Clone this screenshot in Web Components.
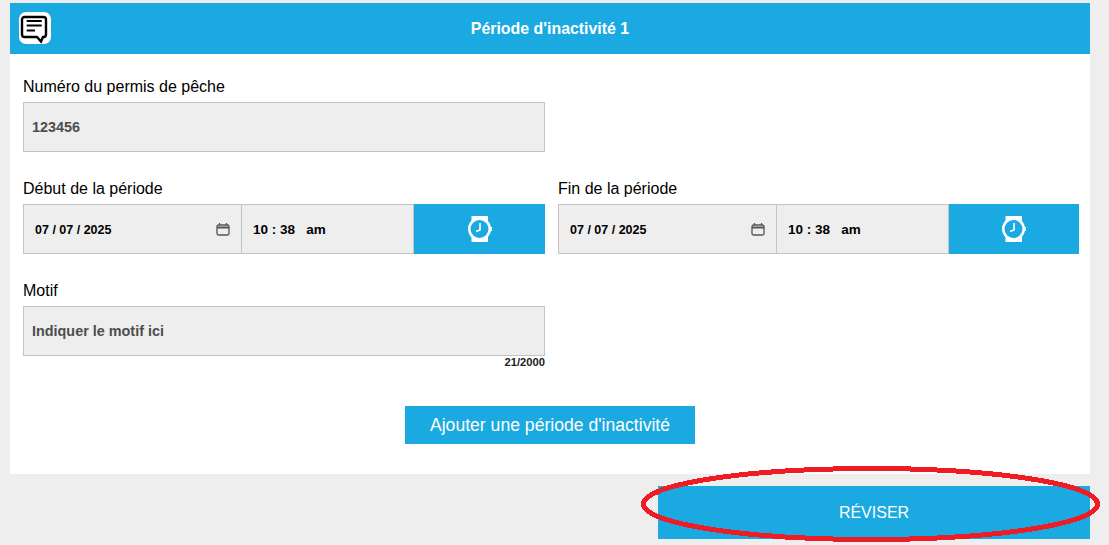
<!DOCTYPE html>
<html lang="fr">
<head>
<meta charset="utf-8">
<title>Période d'inactivité</title>
<style>
  html, body { margin: 0; height: 100%; overflow: hidden; }
  body { background: #eeeeee; font-family: "Liberation Sans", Arial, sans-serif; position: relative; }
</style>
</head>
<body>
<inactivity-page>
  <form-card title="Période d'inactivité 1">
    <form-field class="wide" label="Numéro du permis de pêche"><text-box>123456</text-box></form-field>
    <span></span>
    <form-field label="Début de la période"><date-time></date-time></form-field>
    <form-field label="Fin de la période"><date-time></date-time></form-field>
    <form-field label="Motif"><text-box counter="21/2000">Indiquer le motif ici</text-box></form-field>
  </form-card>
</inactivity-page>

<script>
class InactivityPage extends HTMLElement {
  constructor() {
    super();
    this.attachShadow({ mode: 'open' }).innerHTML = `
      <style>
        :host { display: block; padding: 3px 19px 0 10px; }
        .foot { display: flex; justify-content: flex-end; margin-top: 12px; }
        .revise { width: 432px; height: 53px; background: #1ba9e1; color: #fff; font-size: 16px;
          display: flex; align-items: center; justify-content: center; }
        .ring { position: absolute; left: 640px; top: 465px; }
      </style>
      <slot></slot>
      <div class="foot"><div class="revise">RÉVISER</div></div>
      <svg class="ring" width="462" height="79" viewBox="0 0 462 79" shape-rendering="crispEdges">
        <ellipse cx="230.5" cy="39" rx="227" ry="35.5" fill="none" stroke="#ee1c25" stroke-width="5"/>
      </svg>`;
  }
}

class FormCard extends HTMLElement {
  constructor() {
    super();
    this.attachShadow({ mode: 'open' }).innerHTML = `
      <style>
        :host { display: block; background: #fff; height: 471px; }
        header { height: 51px; background: #1ba9e1; color: #fff; font-weight: bold; font-size: 15.9px;
          display: flex; align-items: center; justify-content: center; position: relative; }
        .logo { position: absolute; left: 9px; top: 9px; }
        .grid { display: grid; grid-template-columns: 522px 521px; column-gap: 13px; row-gap: 28px;
          padding: 24px 0 0 13px; }
        .add-row { display: flex; justify-content: center; margin-top: 38px; }
        .add { width: 290px; height: 38px; background: #1ba9e1; color: #fff; font-size: 17.6px;
          display: flex; align-items: center; justify-content: center; }
      </style>
      <header>
        <svg class="logo" width="32" height="32" viewBox="0 0 32 32">
          <rect x="0" y="0" width="32" height="32" rx="7" fill="#fff"/>
          <path d="M5.5 5H24.5A2.5 2.5 0 0 1 27 7.5V22.5A2.5 2.5 0 0 1 24.5 25H24L22 29.5L18 25H5.5A2.5 2.5 0 0 1 3 22.5V7.5A2.5 2.5 0 0 1 5.5 5Z" fill="none" stroke="#000" stroke-width="2.4"/>
          <path d="M7.7 9H22.7M7.7 13.5H22.7M7.7 18.5H16" fill="none" stroke="#000" stroke-width="2"/>
        </svg>
        <span id="title"></span>
      </header>
      <div class="grid"><slot></slot></div>
      <div class="add-row"><div class="add">Ajouter une période d'inactivité</div></div>`;
    this.shadowRoot.querySelector('#title').textContent = this.getAttribute('title');
    this.removeAttribute('title');
  }
}

class FormField extends HTMLElement {
  constructor() {
    super();
    this.attachShadow({ mode: 'open' }).innerHTML = `
      <style>
        :host { display: block; color: #000; }
        label { display: block; font-size: 16px; line-height: 18px; margin-bottom: 6px; }
      </style>
      <label></label>
      <slot></slot>`;
    this.shadowRoot.querySelector('label').textContent = this.getAttribute('label');
  }
}

class TextBox extends HTMLElement {
  constructor() {
    super();
    this.attachShadow({ mode: 'open' }).innerHTML = `
      <style>
        :host { display: block; }
        .box { box-sizing: border-box; height: 50px; background: #eeeeee; border: 1px solid #c4c4c4;
          padding-left: 8px; display: flex; align-items: center; font-size: 14.4px; font-weight: bold; color: #4d4d4d; }
        .count { font-size: 11.2px; line-height: 12px; font-weight: bold; color: #222; text-align: right; }
      </style>
      <div class="box"><slot></slot></div>
      <div class="count"></div>`;
    const c = this.getAttribute('counter');
    if (c) this.shadowRoot.querySelector('.count').textContent = c;
  }
}

class DateTime extends HTMLElement {
  constructor() {
    super();
    this.attachShadow({ mode: 'open' }).innerHTML = `
      <style>
        :host { display: flex; height: 50px; font-size: 12.5px; font-weight: bold; color: #000; }
        .date, .time { box-sizing: border-box; background: #eeeeee; border: 1px solid #c4c4c4;
          display: flex; align-items: center; }
        .date { width: 219px; padding: 0 11px; justify-content: space-between; }
        .date span { padding-top: 1px; }
        .time { width: 172px; border-left: 0; padding-left: 11px; font-size: 13.5px; white-space: pre; }
        .btn { flex: 1; background: #1ba9e1; display: flex; align-items: center; justify-content: center; }
      </style>
      <div class="date"><span>07 / 07 / 2025</span>
        <svg width="14" height="14" viewBox="0 0 14 14">
          <path d="M1 4.5V11.5A1.5 1.5 0 0 0 2.5 13H11.5A1.5 1.5 0 0 0 13 11.5V4.5A1.5 1.5 0 0 0 11.5 3H2.5A1.5 1.5 0 0 0 1 4.5Z" fill="none" stroke="#555" stroke-width="1.3"/>
          <path d="M1 5.5H13" stroke="#555" stroke-width="2"/>
          <path d="M3.5 1V3M10.5 1V3" stroke="#555" stroke-width="1.3"/>
        </svg>
      </div>
      <div class="time">10 : 38   am</div>
      <div class="btn">
        <svg width="24" height="26" viewBox="0 0 24 26">
          <rect x="3.5" y="0" width="16.5" height="5" fill="#fff"/>
          <rect x="3.5" y="21" width="16.5" height="5" fill="#fff"/>
          <rect x="21" y="11" width="3" height="4" fill="#fff"/>
          <circle cx="11.5" cy="13" r="11.5" fill="#fff"/>
          <circle cx="11.5" cy="13" r="9" fill="#1ba9e1"/>
          <path d="M12 7V14L8 15.5" fill="none" stroke="#fff" stroke-width="1.6"/>
        </svg>
      </div>`;
  }
}

customElements.define('inactivity-page', InactivityPage);
customElements.define('form-card', FormCard);
customElements.define('form-field', FormField);
customElements.define('text-box', TextBox);
customElements.define('date-time', DateTime);
</script>
</body>
</html>
